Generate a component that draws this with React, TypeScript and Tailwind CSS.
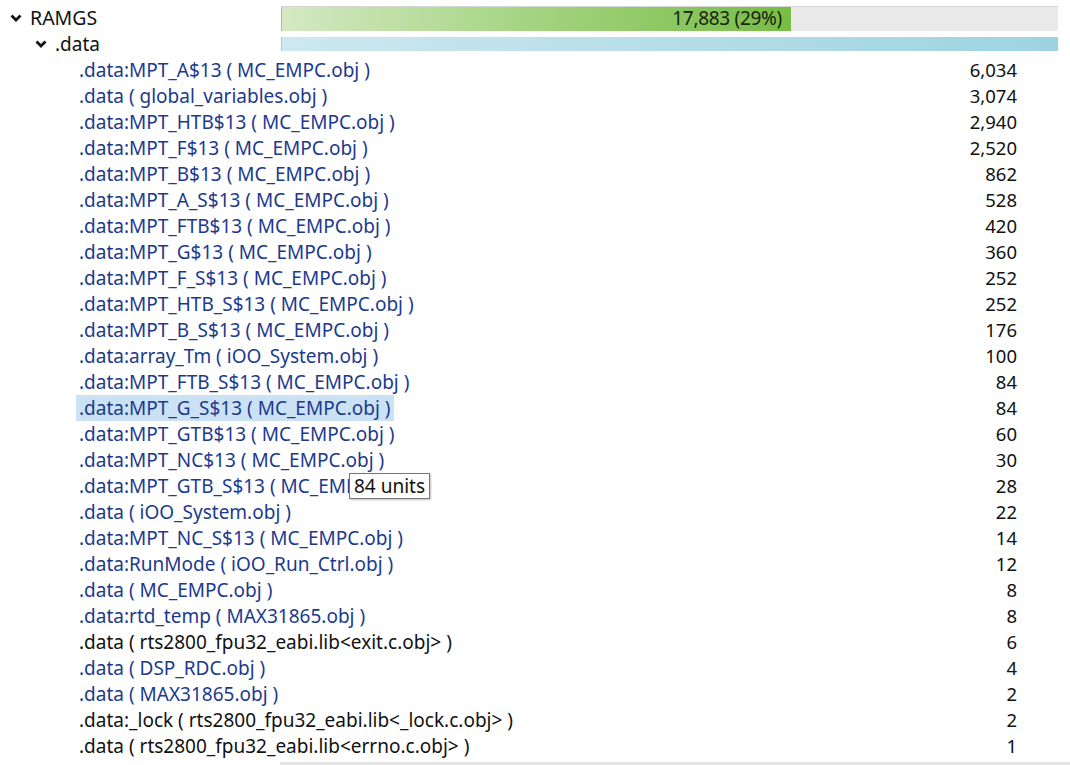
import React from "react";

interface Item {
  name: string;
  file: string;
  size: string;
  blue: boolean;
}

const items: Item[] = [
  { name: ".data:MPT_A$13", file: "MC_EMPC.obj", size: "6,034", blue: true },
  { name: ".data", file: "global_variables.obj", size: "3,074", blue: true },
  { name: ".data:MPT_HTB$13", file: "MC_EMPC.obj", size: "2,940", blue: true },
  { name: ".data:MPT_F$13", file: "MC_EMPC.obj", size: "2,520", blue: true },
  { name: ".data:MPT_B$13", file: "MC_EMPC.obj", size: "862", blue: true },
  { name: ".data:MPT_A_S$13", file: "MC_EMPC.obj", size: "528", blue: true },
  { name: ".data:MPT_FTB$13", file: "MC_EMPC.obj", size: "420", blue: true },
  { name: ".data:MPT_G$13", file: "MC_EMPC.obj", size: "360", blue: true },
  { name: ".data:MPT_F_S$13", file: "MC_EMPC.obj", size: "252", blue: true },
  { name: ".data:MPT_HTB_S$13", file: "MC_EMPC.obj", size: "252", blue: true },
  { name: ".data:MPT_B_S$13", file: "MC_EMPC.obj", size: "176", blue: true },
  { name: ".data:array_Tm", file: "iOO_System.obj", size: "100", blue: true },
  { name: ".data:MPT_FTB_S$13", file: "MC_EMPC.obj", size: "84", blue: true },
  { name: ".data:MPT_G_S$13", file: "MC_EMPC.obj", size: "84", blue: true },
  { name: ".data:MPT_GTB$13", file: "MC_EMPC.obj", size: "60", blue: true },
  { name: ".data:MPT_NC$13", file: "MC_EMPC.obj", size: "30", blue: true },
  { name: ".data:MPT_GTB_S$13", file: "MC_EMPC.obj", size: "28", blue: true },
  { name: ".data", file: "iOO_System.obj", size: "22", blue: true },
  { name: ".data:MPT_NC_S$13", file: "MC_EMPC.obj", size: "14", blue: true },
  { name: ".data:RunMode", file: "iOO_Run_Ctrl.obj", size: "12", blue: true },
  { name: ".data", file: "MC_EMPC.obj", size: "8", blue: true },
  { name: ".data:rtd_temp", file: "MAX31865.obj", size: "8", blue: true },
  { name: ".data", file: "rts2800_fpu32_eabi.lib<exit.c.obj>", size: "6", blue: false },
  { name: ".data", file: "DSP_RDC.obj", size: "4", blue: true },
  { name: ".data", file: "MAX31865.obj", size: "2", blue: true },
  { name: ".data:_lock", file: "rts2800_fpu32_eabi.lib<_lock.c.obj>", size: "2", blue: false },
  { name: ".data", file: "rts2800_fpu32_eabi.lib<errno.c.obj>", size: "1", blue: false },
];

const SELECTED = 13;

function Chevron() {
  return (
    <svg width="12" height="8" viewBox="0 0 12 8" className="shrink-0">
      <polyline points="1.5,1.5 6,6 10.5,1.5" fill="none" stroke="#111" strokeWidth="2.8" />
    </svg>
  );
}

export default function App() {
  return (
    <div
      className="relative w-[1070px] h-[765px] overflow-hidden bg-white pt-[5px] text-[19px] text-[#111]"
      style={{ fontFamily: '"Noto Sans", "Open Sans", sans-serif' }}
    >
      {/* RAMGS */}
      <div className="flex h-[26px] items-center">
        <div className="flex w-[281px] items-center gap-[8px] pl-[10px]">
          <Chevron />
          <span className="text-[19.5px]">RAMGS</span>
        </div>
        <div className="flex h-[25px] w-[777px] bg-[#e9e9e9] border-t border-[#d6d6d6]">
          <div className="flex h-full w-[510px] items-center justify-end bg-gradient-to-r from-[#d5e8c3] via-[#a3d37f] to-[#77bd44] pr-[9px] border-l border-[#9cc77c]">
            <span className="text-[19px] tracking-[-0.3px] text-[#18240f]">17,883 (29%)</span>
          </div>
        </div>
      </div>

      {/* .data */}
      <div className="flex h-[26px] items-center">
        <div className="flex w-[281px] items-center gap-[8px] pl-[35px]">
          <Chevron />
          <span>.data</span>
        </div>
        <div className="h-[14px] w-[777px] bg-gradient-to-r from-[#cde8f0] to-[#9dd3e0] border-l border-[#a9c7d0]" />
      </div>

      {items.map((it, i) => (
        <div key={i} className="flex h-[26px] items-center justify-between">
          <div
            className={
              "ml-[76px] flex h-[26px] items-center pl-[3px] pr-[4px] text-[19px] " +
              (i === SELECTED ? "bg-[#cbe1f4] " : "") +
              (it.blue ? "text-[#1b3a8e]" : "text-[#111]")
            }
          >
            <span className="whitespace-pre">{`${it.name} ( ${it.file} )`}</span>
          </div>
          <span className="mr-[53px] text-right text-[18.5px] text-[#111]">{it.size}</span>
        </div>
      ))}

      {/* tooltip */}
      <div className="absolute left-[349px] top-[473px] border border-[#767676] bg-white px-[4px] leading-[24px] text-[19px] text-[#111] shadow-[1px_1px_2px_rgba(0,0,0,0.25)]">
        84 units
      </div>

      <div className="absolute bottom-0 left-[280px] h-[3px] w-[790px] bg-[#e4e4e4]" />
    </div>
  );
}
